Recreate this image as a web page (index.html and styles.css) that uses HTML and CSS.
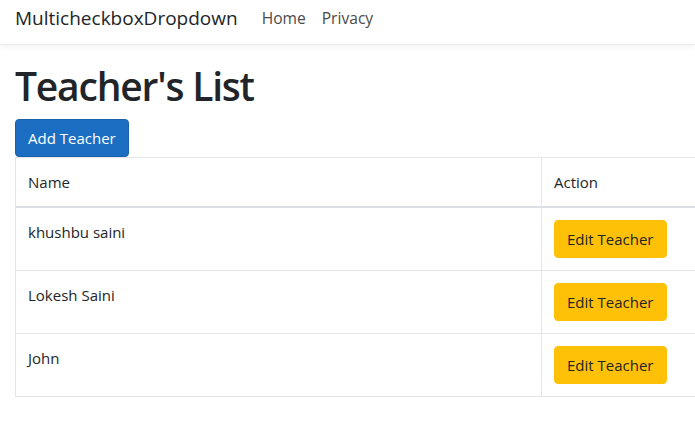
FILE: index.html
```html
<!DOCTYPE html>
<html lang="en">
<head>
<meta charset="utf-8">
<title>Teacher's List</title>
<link rel="stylesheet" href="styles.css">
</head>
<body>
<header class="navbar">
  <a class="brand" href="#">MulticheckboxDropdown</a>
  <nav class="nav">
    <a class="nav-link" href="#">Home</a>
    <a class="nav-link" href="#">Privacy</a>
  </nav>
</header>
<main class="container">
  <h1 class="title">Teacher's List</h1>
  <a class="btn btn-primary" href="#">Add Teacher</a>
  <table class="table">
    <thead>
      <tr><th class="col-name">Name</th><th>Action</th></tr>
    </thead>
    <tbody>
      <tr><td>khushbu saini</td><td><a class="btn btn-warning" href="#">Edit Teacher</a></td></tr>
      <tr><td>Lokesh Saini</td><td><a class="btn btn-warning" href="#">Edit Teacher</a></td></tr>
      <tr><td>John</td><td><a class="btn btn-warning" href="#">Edit Teacher</a></td></tr>
    </tbody>
  </table>
</main>
</body>
</html>
```
FILE: styles.css
```css
html, body {
  margin: 0;
  padding: 0;
  background: #fff;
  overflow: hidden;
}
body {
  font-family: "Open Sans", "Noto Sans", sans-serif;
  color: #212529;
  font-size: 15px;
}
a { text-decoration: none; }

.navbar {
  display: flex;
  align-items: center;
  height: 45px;
  padding: 0 15px 8px;
  border-bottom: 1px solid #ececec;
  box-shadow: 0 2px 8px rgba(0,0,0,0.05);
  box-sizing: border-box;
}
.brand {
  font-size: 19px;
  color: #212529;
  margin-right: 24px;
}
.nav {
  display: flex;
  gap: 16px;
}
.nav-link {
  font-size: 15.6px;
  color: #4a4a4a;
}

.container {
  padding: 0 15px;
}
.title {
  font-size: 39px;
  font-weight: 600;
  letter-spacing: -1.2px;
  margin: 18px 0 9px;
  line-height: 1.2;
  color: #212529;
}
.btn {
  display: inline-block;
  padding: 6px 12px;
  font-size: 15px;
  line-height: 24px;
  border-radius: 4px;
}
.btn-primary {
  background: #1b6ec2;
  border: 1px solid #1861ac;
  color: #fff;
}
.btn-warning {
  background: #ffc107;
  border: 1px solid #ffc107;
  color: #212529;
}

.table {
  width: 720px;
  border-collapse: collapse;
  margin-top: 0;
}
.table th, .table td {
  border: 1px solid #e3e6e9;
  padding: 12px 12px;
  text-align: left;
  vertical-align: top;
  font-weight: 400;
  font-size: 15px;
  line-height: 24px;
}
.table thead th {
  border-bottom: 2px solid #dcdfe3;
}
.col-name {
  width: 501px;
}
```
